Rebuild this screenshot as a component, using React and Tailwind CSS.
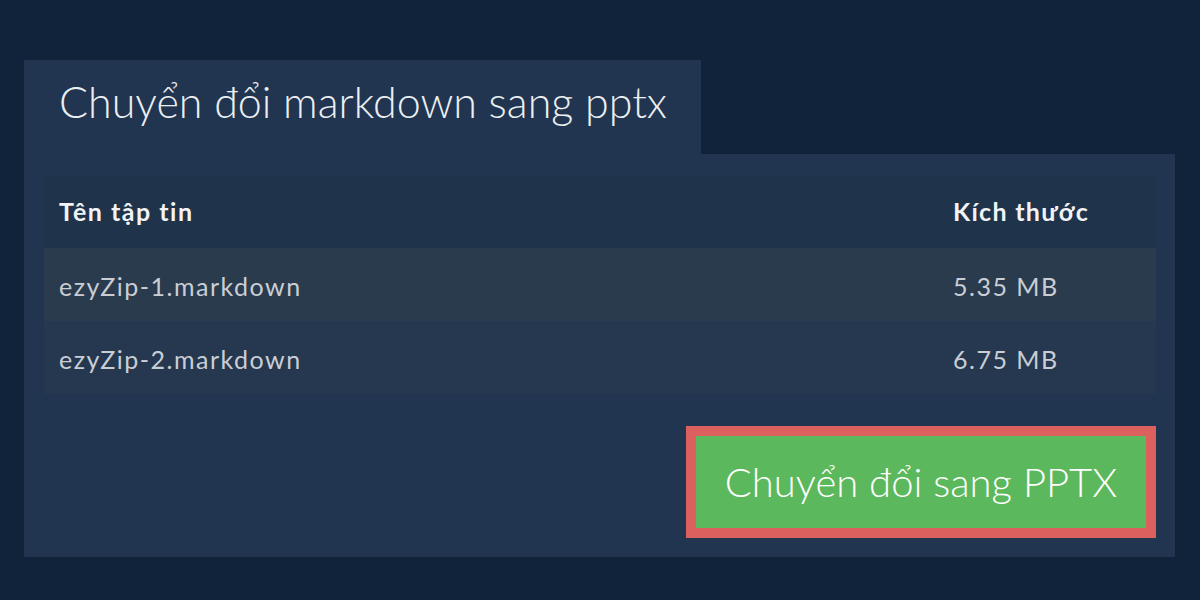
export default function App() {
  const files = [
    { name: "ezyZip-1.markdown", size: "5.35 MB", bg: "bg-[#2a3b4d]" },
    { name: "ezyZip-2.markdown", size: "6.75 MB", bg: "bg-[#25384f]" },
  ];

  return (
    <div
      className="w-[1200px] h-[600px] bg-[#10233a] pt-[60px] pl-[24px]"
      style={{ fontFamily: "Lato, 'Noto Sans', sans-serif" }}
    >
      {/* Tab title */}
      <div className="w-[677px] h-[94px] bg-[#213550] flex items-center pl-[35px]">
        <h1 className="text-[43px] font-light text-[#eceff2] leading-none pb-[12px]">
          Chuyển đổi markdown sang pptx
        </h1>
      </div>

      {/* Panel */}
      <div className="w-[1151px] bg-[#213550] pt-[21px] pl-[20px] pr-[19px] pb-[19px]">
        <table className="w-full border-collapse">
          <thead>
            <tr className="bg-[#1f334b] h-[73px]">
              <th className="text-left pl-[15px] text-[25px] tracking-[1.5px] font-bold text-[#f1f3f5]">Tên tập tin</th>
              <th className="text-left pl-[15px] w-[218px] text-[25px] tracking-[1.3px] font-bold text-[#f1f3f5]">Kích thước</th>
            </tr>
          </thead>
          <tbody>
            {files.map((f) => (
              <tr key={f.name} className={`${f.bg} h-[73px]`}>
                <td className="pl-[15px] pt-[5px] text-[25px] tracking-[1.5px] text-[#c9ced5]">{f.name}</td>
                <td className="pl-[15px] pt-[5px] text-[25px] tracking-[1.5px] text-[#c9ced5]">{f.size}</td>
              </tr>
            ))}
          </tbody>
        </table>

        <div className="flex justify-end mt-[32px]">
          <button className="w-[470px] h-[112px] border-[10px] border-[#dc605e] bg-[#5cb85c] text-white text-[40px] font-light">
            Chuyển đổi sang PPTX
          </button>
        </div>
      </div>
    </div>
  );
}
